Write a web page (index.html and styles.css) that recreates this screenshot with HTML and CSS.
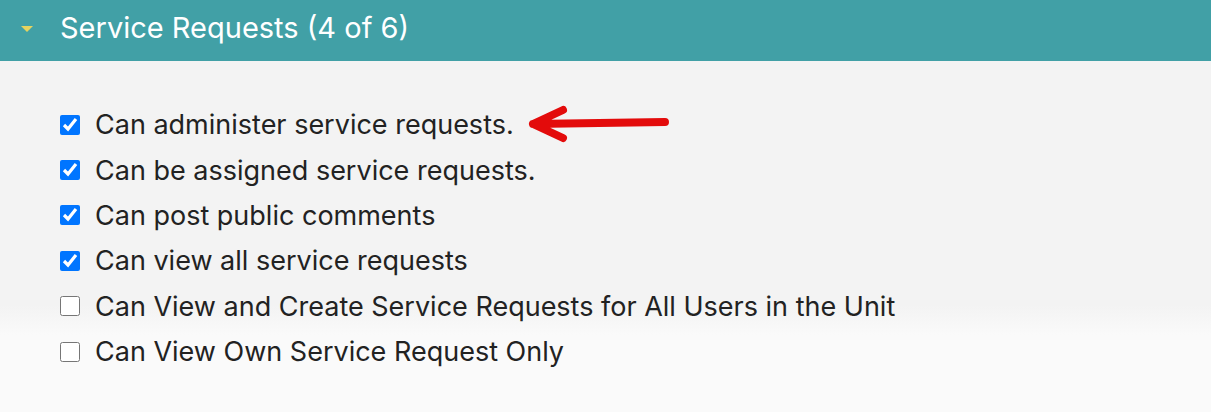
FILE: index.html
```html
<!DOCTYPE html>
<html lang="en">
<head>
<meta charset="utf-8">
<link rel="stylesheet" href="styles.css">
</head>
<body>
<div class="panel">
  <div class="panel-header">
    <span class="caret"></span>
    <span class="panel-title">Service Requests (4 of 6)</span>
  </div>
  <div class="panel-body">
    <ul class="perm-list">
      <li class="perm"><input type="checkbox" checked><span>Can administer service requests.</span>
        <svg class="arrow" width="150" height="44" viewBox="0 0 150 44"><path d="M138 18 L6 20 M36 6 L6 20 L36 34" fill="none" stroke="#e30b0b" stroke-width="8" stroke-linecap="round" stroke-linejoin="round"/></svg>
      </li>
      <li class="perm"><input type="checkbox" checked><span>Can be assigned service requests.</span></li>
      <li class="perm"><input type="checkbox" checked><span>Can post public comments</span></li>
      <li class="perm"><input type="checkbox" checked><span>Can view all service requests</span></li>
      <li class="perm"><input type="checkbox"><span>Can View and Create Service Requests for All Users in the Unit</span></li>
      <li class="perm"><input type="checkbox"><span>Can View Own Service Request Only</span></li>
    </ul>
  </div>
</div>
</body>
</html>
```
FILE: styles.css
```css
html, body {
  margin: 0;
  padding: 0;
}
body {
  font-family: Inter, "Open Sans", sans-serif;
  background: #f3f3f3;
  width: 1211px;
  height: 412px;
  overflow: hidden;
}
.panel {
  height: 412px;
  background: linear-gradient(to bottom, #f3f3f3 0px, #f3f3f3 305px, #fafafa 335px, #fafafa 100%);
}
.panel-header {
  height: 61px;
  background: #41a0a6;
  display: flex;
  align-items: center;
  padding-left: 21px;
}
.caret {
  width: 0;
  height: 0;
  border-left: 6px solid transparent;
  border-right: 6px solid transparent;
  border-top: 6px solid #e6d35e;
  margin-right: 27px;
  margin-top: -4px;
}
.panel-title {
  color: #ffffff;
  font-size: 29px;
  font-weight: 400;
  margin-top: -6px;
}
.panel-body {
  padding: 41px 0 0 60px;
}
.perm-list {
  list-style: none;
  margin: 0;
  padding: 0;
}
.perm {
  display: flex;
  align-items: center;
  height: 45.4px;
  font-size: 27px;
  color: #222222;
  position: relative;
}
.perm input {
  width: 20px;
  height: 20px;
  margin: 0 15px 0 0;
  accent-color: #0075ff;
}
.arrow {
  position: absolute;
  left: 467px;
  top: 2px;
}
```
